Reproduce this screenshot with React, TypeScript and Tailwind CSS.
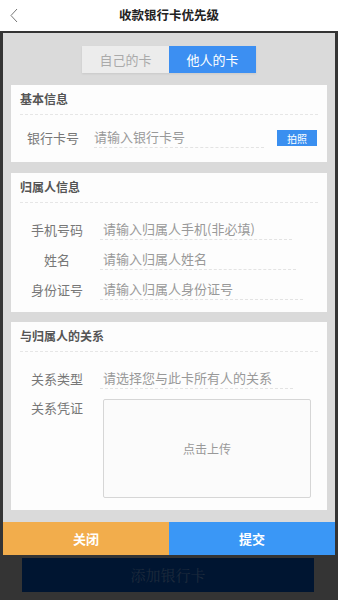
import React from "react";

const font = { fontFamily: '"Noto Sans CJK SC", "Noto Sans", sans-serif' };

function Row({ label, placeholder, lineWidth }: { label: string; placeholder: string; lineWidth: string }) {
  return (
    <div className="flex h-[30px] items-center">
      <div className="ml-[3px] w-[86px] text-center text-[13px] text-[#777]">{label}</div>
      <div className={`h-[20px] border-b border-dashed border-[#e3e3e3] text-[13px] leading-[18px] text-[#999] ${lineWidth}`}>
        <span className="ml-[3px]">{placeholder}</span>
      </div>
    </div>
  );
}

function CardTitle({ title }: { title: string }) {
  return (
    <div className="mx-[9px] flex h-[30px] items-end border-b border-dashed border-[#e6e6e6] pb-[6px] text-[12px] font-bold text-[#555]">
      {title}
    </div>
  );
}

export default function App() {
  return (
    <div className="flex h-[600px] w-[338px] flex-col overflow-hidden bg-[#343434]" style={font}>
      <header className="relative flex h-[31px] shrink-0 items-center justify-center bg-white">
        <svg className="absolute left-[9px] top-[8px]" width="10" height="15" viewBox="0 0 10 15" fill="none">
          <polyline points="8,1 2,7.5 8,14" stroke="#777" strokeWidth="1" />
        </svg>
        <h1 className="text-[12.5px] font-bold text-[#222]">收款银行卡优先级</h1>
      </header>

      <div className="mx-[3px] mt-[2px] flex h-[522px] shrink-0 flex-col bg-[#dadada]">
        <div className="mt-[13px] flex justify-center">
          <div className="flex h-[27px] w-[174px] shadow-[0_1px_2px_rgba(0,0,0,0.08)]">
            <div className="flex w-[87px] items-center justify-center bg-[#ececec] text-[13px] text-[#aaa]">自己的卡</div>
            <div className="flex w-[87px] items-center justify-center bg-[#3c8ff2] text-[13px] text-white">他人的卡</div>
          </div>
        </div>

        <div className="mx-[8px] mt-[12px] h-[77px] bg-[#fdfdfd]">
          <CardTitle title="基本信息" />
          <div className="mt-[10px] flex h-[26px] items-center">
            <div className="ml-[16px] text-[13px] text-[#777]">银行卡号</div>
            <div className="ml-[15px] h-[20px] w-[170px] border-b border-dashed border-[#e3e3e3] text-[13px] leading-[18px] text-[#999]">
              <span>请输入银行卡号</span>
            </div>
            <button className="ml-[13px] flex h-[16px] w-[40px] items-center justify-center bg-[#3a8ff0] text-[10px] text-white">拍照</button>
          </div>
        </div>

        <div className="mx-[8px] mt-[11px] h-[139px] bg-[#fdfdfd]">
          <CardTitle title="归属人信息" />
          <div className="mt-[12px] flex flex-col">
            <Row label="手机号码" placeholder="请输入归属人手机(非必填)" lineWidth="w-[192px]" />
            <Row label="姓名" placeholder="请输入归属人姓名" lineWidth="w-[196px]" />
            <Row label="身份证号" placeholder="请输入归属人身份证号" lineWidth="w-[203px]" />
          </div>
        </div>

        <div className="mx-[8px] mt-[10px] h-[188px] bg-[#fdfdfd]">
          <CardTitle title="与归属人的关系" />
          <div className="mt-[12px]">
            <Row label="关系类型" placeholder="请选择您与此卡所有人的关系" lineWidth="w-[193px]" />
          </div>
          <div className="mt-[3px] flex">
            <div className="ml-[3px] mt-[1px] w-[86px] text-center text-[13px] text-[#777]">关系凭证</div>
            <div className="ml-[3px] mt-[2px] flex h-[99px] w-[208px] items-center justify-center rounded-[2px] border border-[#d6d6d6] bg-[#fbfbfb] text-[12px] text-[#999]">
              点击上传
            </div>
          </div>
        </div>

        <div className="mt-auto flex h-[33px]">
          <button className="flex flex-1 items-center justify-center bg-[#f2ad4c] text-[13px] font-bold text-white">关闭</button>
          <button className="flex flex-1 items-center justify-center bg-[#3a97f6] text-[13px] font-bold text-white">提交</button>
        </div>
      </div>

      <div className="ml-[22px] mt-[3px] flex h-[34px] w-[292px] items-center justify-center bg-[#001531]">
        <span className="text-[15px] text-[#1d2a3c]" style={{ fontFamily: '"Noto Serif CJK SC", "Noto Sans CJK SC", serif' }}>
          添加银行卡
        </span>
      </div>
    </div>
  );
}
